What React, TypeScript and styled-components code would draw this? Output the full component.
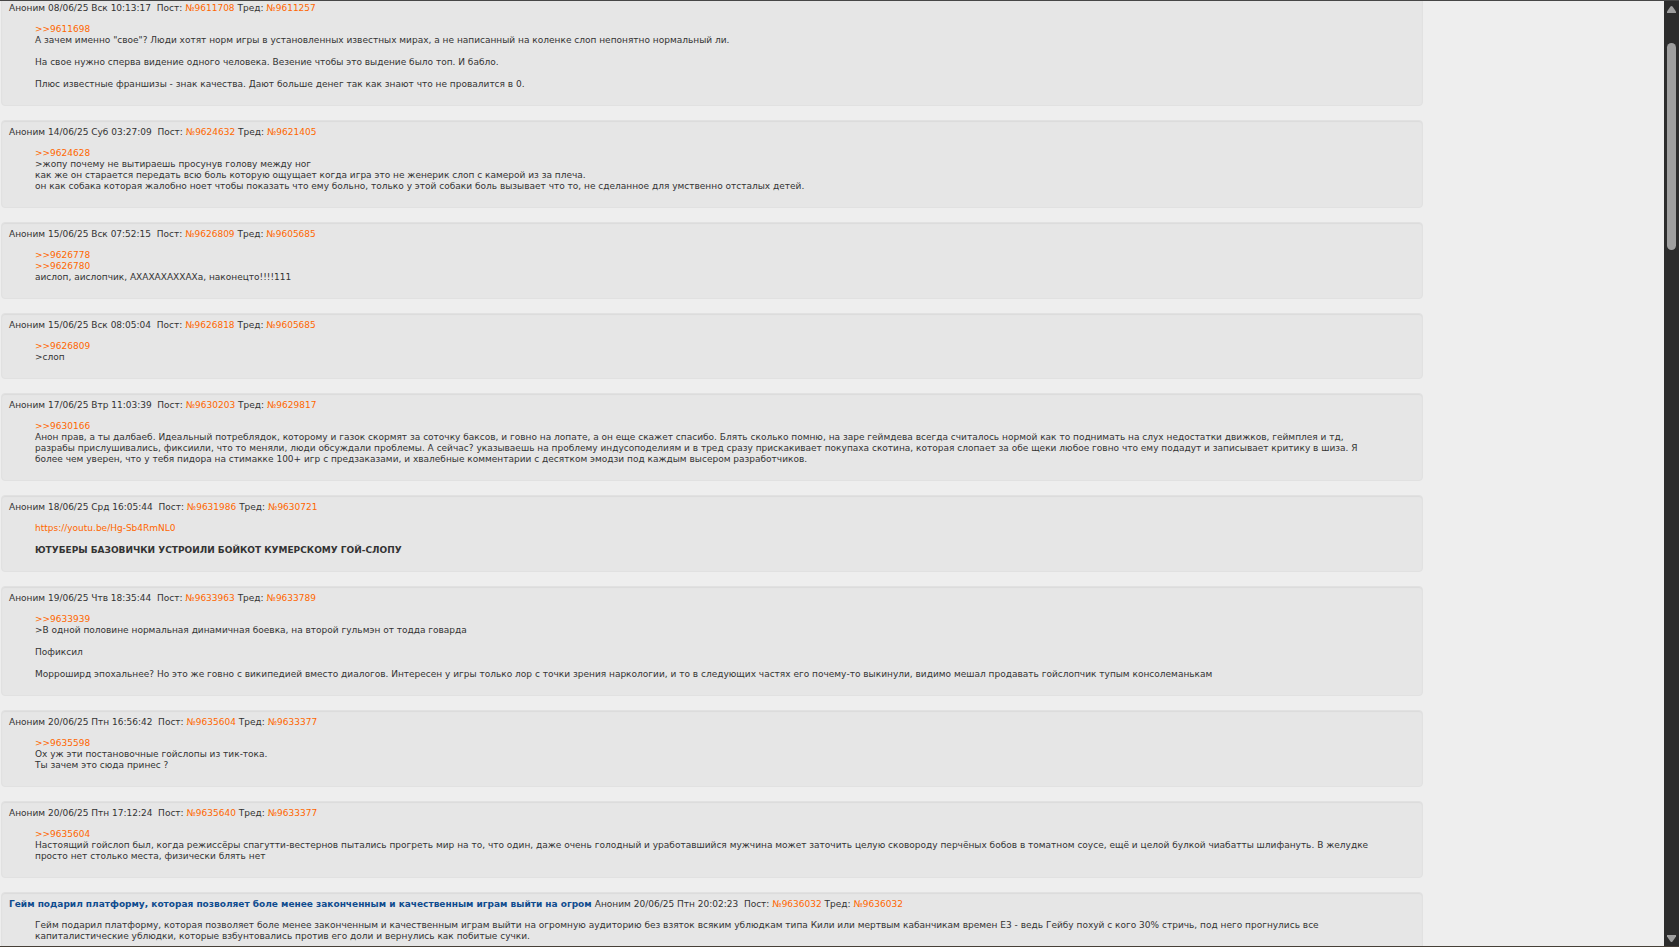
import React from "react";
import styled, { createGlobalStyle } from "styled-components";

const GlobalStyle = createGlobalStyle`
  *, *::before, *::after { box-sizing: border-box; }
  body {
    margin: 0;
    background: #eeeeee;
    color: #333333;
    font: 9px/11px Verdana, "DejaVu Sans", sans-serif;
  }
`;

const Viewport = styled.div`
  display: flex;
  height: 100vh;
  overflow: hidden;
  border-top: 1px solid #464646;
  border-bottom: 1px solid #464038;
`;

const Feed = styled.main`
  flex: 1;
  min-width: 0;
  display: flex;
  flex-direction: column;
  align-items: flex-start;
  gap: 14px;
  margin-top: -5px;
  padding-left: 1px;
`;

const Post = styled.article`
  flex: none;
  width: 85.5%;
  padding: 6px 8px 15px 7px;
  background: #e6e6e6;
  border: 1px solid #e1e1e1;
  border-radius: 4px;
  box-shadow: inset 0 1px 1px rgba(0, 0, 0, 0.05);
`;

const PostHeader = styled.header`
  margin-bottom: 10px;
`;

const Subject = styled.strong`
  color: #0f4c8f;
`;

const Meta = styled.span`
  white-space: pre;
`;

const Body = styled.p`
  margin: 0 34px 0 26px;
  white-space: pre-line;
`;

const Link = styled.a`
  color: #ff6600;
  text-decoration: none;
`;

const Scrollbar = styled.div`
  flex: none;
  width: 15px;
  display: flex;
  flex-direction: column;
  align-items: center;
  justify-content: space-between;
  padding: 5px 0 4px;
  background: #2c2c2c;
`;

const Track = styled.div`
  flex: 1;
  width: 9px;
  padding-top: 30px;
`;

const Thumb = styled.div`
  width: 9px;
  height: 23.2%;
  border-radius: 5px;
  background: #9f9f9f;
`;

const Arrow = ({ down = false }: { down?: boolean }) => (
  <svg width="9" height="7" viewBox="0 0 9 7" aria-hidden="true">
    <path
      d={down ? "M0 0H9V1.6L5.5 6.5Q4.5 7.5 3.5 6.5L0 1.6Z" : "M0 7H9V5.4L5.5.5Q4.5-.5 3.5.5L0 5.4Z"}
      fill="#9f9f9f"
    />
  </svg>
);

interface PostData {
  subject?: string;
  date: string;
  post: string;
  thread: string;
  links?: string[];
  text?: string;
  strong?: string;
}

const posts: PostData[] = [
  {
    date: "08/06/25 Вск 10:13:17",
    post: "9611708",
    thread: "9611257",
    links: [">>9611698"],
    text: `А зачем именно "свое"? Люди хотят норм игры в установленных известных мирах, а не написанный на коленке слоп непонятно нормальный ли.

На свое нужно сперва видение одного человека. Везение чтобы это выдение было топ. И бабло.

Плюс известные франшизы - знак качества. Дают больше денег так как знают что не провалится в 0.`,
  },
  {
    date: "14/06/25 Суб 03:27:09",
    post: "9624632",
    thread: "9621405",
    links: [">>9624628"],
    text: `>жопу почему не вытираешь просунув голову между ног
как же он старается передать всю боль которую ощущает когда игра это не женерик слоп с камерой из за плеча.
он как собака которая жалобно ноет чтобы показать что ему больно, только у этой собаки боль вызывает что то, не сделанное для умственно отсталых детей.`,
  },
  {
    date: "15/06/25 Вск 07:52:15",
    post: "9626809",
    thread: "9605685",
    links: [">>9626778", ">>9626780"],
    text: "аислоп, аислопчик, АХАХАХАХХАХа, наконецто!!!!111",
  },
  {
    date: "15/06/25 Вск 08:05:04",
    post: "9626818",
    thread: "9605685",
    links: [">>9626809"],
    text: ">слоп",
  },
  {
    date: "17/06/25 Втр 11:03:39",
    post: "9630203",
    thread: "9629817",
    links: [">>9630166"],
    text: "Анон прав, а ты далбаеб. Идеальный потреблядок, которому и газок скормят за соточку баксов, и говно на лопате, а он еще скажет спасибо. Блять сколько помню, на заре геймдева всегда считалось нормой как то поднимать на слух недостатки движков, геймплея и тд, разрабы прислушивались, фиксиили, что то меняли, люди обсуждали проблемы. А сейчас? указываешь на проблему индусоподелиям и в тред сразу прискакивает покупаха скотина, которая слопает за обе щеки любое говно что ему подадут и записывает критику в шиза. Я более чем уверен, что у тебя пидора на стимакке 100+ игр с предзаказами, и хвалебные комментарии с десятком эмодзи под каждым высером разработчиков.",
  },
  {
    date: "18/06/25 Срд 16:05:44",
    post: "9631986",
    thread: "9630721",
    links: ["https://youtu.be/Hg-Sb4RmNL0"],
    strong: "ЮТУБЕРЫ БАЗОВИЧКИ УСТРОИЛИ БОЙКОТ КУМЕРСКОМУ ГОЙ-СЛОПУ",
  },
  {
    date: "19/06/25 Чтв 18:35:44",
    post: "9633963",
    thread: "9633789",
    links: [">>9633939"],
    text: `>В одной половине нормальная динамичная боевка, на второй гульмэн от тодда говарда

Пофиксил

Морроширд эпохальнее? Но это же говно с википедией вместо диалогов. Интересен у игры только лор с точки зрения наркологии, и то в следующих частях его почему-то выкинули, видимо мешал продавать гойслопчик тупым консолеманькам`,
  },
  {
    date: "20/06/25 Птн 16:56:42",
    post: "9635604",
    thread: "9633377",
    links: [">>9635598"],
    text: `Ох уж эти постановочные гойслопы из тик-тока.
Ты зачем это сюда принес ?`,
  },
  {
    date: "20/06/25 Птн 17:12:24",
    post: "9635640",
    thread: "9633377",
    links: [">>9635604"],
    text: "Настоящий гойслоп был, когда режиссёры спагутти-вестернов пытались прогреть мир на то, что один, даже очень голодный и уработавшийся мужчина может заточить целую сковороду перчёных бобов в томатном соусе, ещё и целой булкой чиабатты шлифануть. В желудке просто нет столько места, физически блять нет",
  },
  {
    subject: "Гейм подарил платформу, которая позволяет боле менее законченным и качественным играм выйти на огром",
    date: "20/06/25 Птн 20:02:23",
    post: "9636032",
    thread: "9636032",
    text: "Гейм подарил платформу, которая позволяет боле менее законченным и качественным играм выйти на огромную аудиторию без взяток всяким ублюдкам типа Кили или мертвым кабанчикам времен E3 - ведь Гейбу похуй с кого 30% стричь, под него прогнулись все капиталистические ублюдки, которые взбунтовались против его доли и вернулись как побитые сучки.",
  },
];

export default function App() {
  return (
    <>
      <GlobalStyle />
      <Viewport>
        <Feed>
          {posts.map((p) => (
            <Post key={p.post}>
              <PostHeader>
                {p.subject && <Subject>{p.subject} </Subject>}
                <Meta>
                  {`Аноним ${p.date}  Пост: `}
                  <Link href={`#${p.post}`}>№{p.post}</Link>
                  {" Тред: "}
                  <Link href={`#${p.thread}`}>№{p.thread}</Link>
                </Meta>
              </PostHeader>
              <Body>
                {p.links?.map((l) => (
                  <React.Fragment key={l}>
                    <Link href={l.startsWith("http") ? l : `#${l.slice(2)}`}>{l}</Link>
                    <br />
                  </React.Fragment>
                ))}
                {p.text}
                {p.strong && (
                  <>
                    <br />
                    <strong>{p.strong}</strong>
                  </>
                )}
              </Body>
            </Post>
          ))}
        </Feed>
        <Scrollbar aria-hidden="true">
          <Arrow />
          <Track>
            <Thumb />
          </Track>
          <Arrow down />
        </Scrollbar>
      </Viewport>
    </>
  );
}
